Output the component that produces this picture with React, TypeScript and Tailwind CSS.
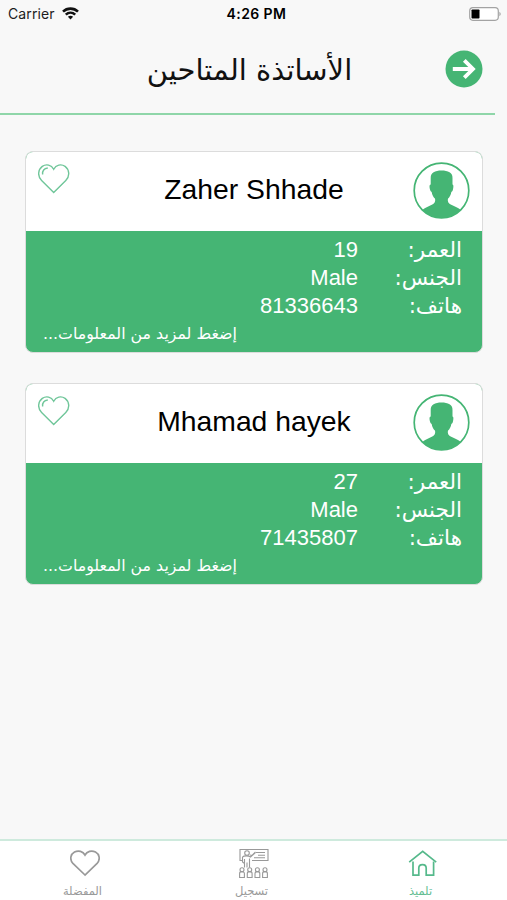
import type { ReactNode } from "react";

interface Teacher {
  name: string;
  age: string;
  gender: string;
  phone: string;
}

const teachers: Teacher[] = [
  { name: "Zaher Shhade", age: "19", gender: "Male", phone: "81336643" },
  { name: "Mhamad hayek", age: "27", gender: "Male", phone: "71435807" },
];

function StatusBar() {
  return (
    <div className="grid h-[27px] grid-cols-3 items-center pl-2 pr-[6px] font-['Inter',sans-serif] text-[14px] text-[#1c1c1c]">
      <div className="flex items-center gap-[7px]">
        <span className="tracking-[0.1px]">Carrier</span>
        <svg width="17" height="13" viewBox="0 0 17 13" fill="none" stroke="#111" strokeWidth="2.6">
          <path d="M1 4.6C5.2.6 11.8.6 16 4.6" />
          <path d="M3.8 7.6c2.7-2.5 6.7-2.5 9.4 0" />
          <path d="M5.9 9.8 8.5 12.4l2.6-2.6c-1.5-1.3-3.7-1.3-5.2 0Z" fill="#111" stroke="none" />
        </svg>
      </div>
      <span className="pl-[4px] text-center font-semibold tracking-[0.4px] text-black">4:26 PM</span>
      <svg className="justify-self-end" width="32" height="14" viewBox="0 0 32 14">
        <rect x="0.7" y="0.7" width="28.6" height="12.6" rx="3.2" fill="#fff" stroke="#a3a3a3" strokeWidth="1.2" />
        <rect x="2.5" y="2.5" width="8" height="9" rx="0.8" fill="#000" />
        <path d="M30.4 4.8v4.4c1.7-.8 1.7-3.6 0-4.4Z" fill="#a3a3a3" />
      </svg>
    </div>
  );
}

function Header() {
  return (
    <header className="mr-3 h-[87px]">
      <div className="flex h-[86px] items-center pl-[54px] pr-3">
        <h1 dir="rtl" className="h-[31px] flex-1 whitespace-nowrap text-center text-[29px] leading-[30px] text-[#111]">
          الأساتذة المتاحين
        </h1>
        <button type="button" aria-label="رجوع" className="-mt-0.5 shrink-0">
          <svg width="38" height="38" viewBox="0 0 38 38" fill="none">
            <circle cx="19" cy="19" r="18.5" fill="#45b574" />
            <path d="M7.8 19h19M19.3 10.3l8.7 8.7-8.7 8.7" stroke="#fff" strokeWidth="3.8" />
          </svg>
        </button>
      </div>
      <div className="h-[1.5px] bg-[#8fd6a9]" />
    </header>
  );
}

function Avatar() {
  return (
    <svg width="57" height="57" viewBox="0 0 57 57">
      <circle cx="28.5" cy="28.5" r="27.3" fill="#fff" stroke="#45b574" strokeWidth="1.7" />
      <path
        d="M17.7 16C17.6 10.500 22 8.500 28.500 8.500S39.800 10.500 39.500 16v6.500c1.300.2 1 3.200.4 5.200-.4 1.500-.9 2-1.500 2.100-.5 3.300-1.700 5.300-3.500 7-.4 3 .4 4.600 2.800 5.800 3.500 1.700 7.300 2.900 9.900 5.200C42.500 53 36.500 56 28.500 56S14.500 53 9.600 47.800c2.600-2.300 6.400-3.500 9.700-5.200 2.400-1.200 3.200-2.800 2.800-5.800-1.800-1.700-3-3.700-3.500-7-.6-.1-1.100-.6-1.500-2.100-.6-2-1.100-5 .6-5.200Z"
        fill="#45b574"
      />
    </svg>
  );
}

function TeacherCard({ teacher }: { teacher: Teacher }) {
  const rows = [
    { label: "العمر:", value: teacher.age },
    { label: "الجنس:", value: teacher.gender },
    { label: "هاتف:", value: teacher.phone },
  ];

  return (
    <article className="h-[202px] overflow-hidden rounded-lg border border-[#dcdcdc] bg-[#45b574]">
      <div className="flex h-[79px] items-start justify-between bg-white pl-3 pr-3 pt-[10px]">
        <svg className="mt-px w-[57px]" width="57" height="32" viewBox="0 0 57 32" fill="none" stroke="#70c69a" strokeWidth="1.4">
          <path d="M15.7 29.5 3.6 17.5C-1 12.9.3 6.4 4.3 3.4 8.3.5 13.4 1.8 15.7 6.3 18 1.8 23.1.5 27.1 3.4c4 3 5.3 9.500.7 14.100Z" />
          <path d="M4.6 11.5C4.3 8 6.3 5.4 9.8 5" />
        </svg>
        <h2 className="pt-3 font-['Liberation_Sans',sans-serif] text-[28.3px] leading-[30px] text-black">{teacher.name}</h2>
        <Avatar />
      </div>
      <div dir="rtl" className="pl-[17px] pr-[20px] pt-[5px] text-white">
        {rows.map((row) => (
          <div key={row.label} className="flex h-7 items-center">
            <span className="w-[104px] shrink-0 whitespace-nowrap text-[21.5px] leading-7">{row.label}</span>
            <span className="font-['Liberation_Sans',sans-serif] text-[22px] leading-7">{row.value}</span>
          </div>
        ))}
        <p className="whitespace-nowrap text-left text-[15.8px] leading-7">إضغط لمزيد من المعلومات...</p>
      </div>
    </article>
  );
}

function HomeIcon() {
  return (
    <svg width="30" height="28" viewBox="0 0 30 28" fill="none" stroke="#55b98b" strokeWidth="1.7">
      <path d="M1.2 13.2 14.7 2.3l13.5 10.9" />
      <path d="M5 12.5v13.7h5.8v-7c0-4.8 7.4-4.8 7.4 0v7h7.4V12.5" />
    </svg>
  );
}

function ClassIcon() {
  return (
    <svg width="30" height="31" viewBox="0 0 30 31" fill="none" stroke="#999" strokeWidth="1.1">
      <path d="M4 12.5H1V1.5h28v11H13M17 4.5h9M19 7.2h7M15 9.8h11" />
      <circle cx="8" cy="5" r="2.3" />
      <path d="M3.5 9c1.5-1.5 6-1.5 8 0l5-4.5M3.5 9v5l2 1.5v4M10.5 10.5v9M8 14.5v5M5.5 11v4M11 7l2 .5L16.5 4" />
      {[1, 8.7, 16.4, 24].map((x) => (
        <g key={x}>
          <circle cx={x + 2} cy="21.7" r="2" />
          <path d={`M${x - 0.4} 29.5v-4c0-2.5 4.8-2.5 4.8 0v4Z`} />
        </g>
      ))}
    </svg>
  );
}

function HeartIcon() {
  return (
    <svg width="30" height="28" viewBox="0 0 30 28" fill="none" stroke="#999" strokeWidth="1.7">
      <path d="M15 26 2.9 14.3C-.7 10.5.7 5 4.5 3 8.5 1 13 2.3 15 6c2-3.7 6.5-5 10.5-3 3.8 2 5.2 7.5 1.6 11.3Z" />
    </svg>
  );
}

function Tab({ label, active, children }: { label: string; active?: boolean; children: ReactNode }) {
  return (
    <button type="button" className={`flex flex-1 flex-col items-center ${active ? "text-[#63bd92]" : "text-[#999]"}`}>
      <span className="flex h-[34px] items-center">{children}</span>
      <span dir="rtl" className="pr-1 pt-[3px] text-[11.5px] leading-4">
        {label}
      </span>
    </button>
  );
}

export default function App() {
  return (
    <div className="flex h-[900px] w-[507px] flex-col overflow-hidden bg-[#f8f8f8] font-['DejaVu_Sans','Noto_Sans',sans-serif]">
      <StatusBar />
      <Header />
      <main className="flex flex-1 flex-col gap-[30px] pl-[25px] pr-6 pt-[37px]">
        {teachers.map((teacher) => (
          <TeacherCard key={teacher.phone} teacher={teacher} />
        ))}
      </main>
      <nav dir="rtl" className="flex h-[61px] border-t-2 border-[#ceeadd] bg-white pt-[5px]">
        <Tab label="تلميذ" active>
          <HomeIcon />
        </Tab>
        <Tab label="تسجيل">
          <ClassIcon />
        </Tab>
        <Tab label="المفضلة">
          <HeartIcon />
        </Tab>
      </nav>
    </div>
  );
}
